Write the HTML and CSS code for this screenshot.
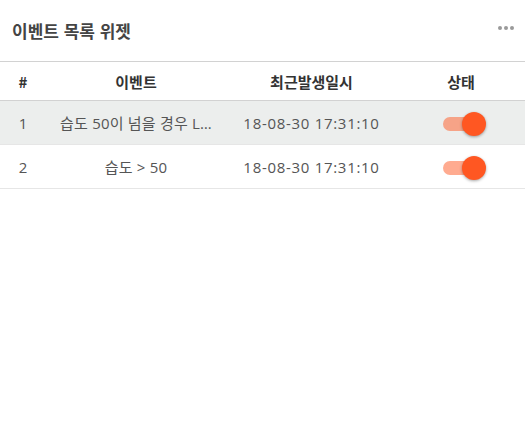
FILE: index.html
```html
<!DOCTYPE html>
<html lang="ko">
<head>
<meta charset="utf-8">
<link rel="stylesheet" href="styles.css">
</head>
<body>
<div class="widget">
  <div class="widget-header">
    <h1 class="widget-title">이벤트 목록 위젯</h1>
    <span class="more" aria-label="더보기"><i></i><i></i><i></i></span>
  </div>
  <table class="event-table">
    <colgroup>
      <col class="c-num"><col class="c-event"><col class="c-date"><col class="c-state">
    </colgroup>
    <thead>
      <tr><th>#</th><th>이벤트</th><th>최근발생일시</th><th>상태</th></tr>
    </thead>
    <tbody>
      <tr class="selected">
        <td>1</td>
        <td class="event">습도 50이 넘을 경우 L…</td>
        <td class="date">18-08-30 17:31:10</td>
        <td><span class="switch"><span class="track"></span><span class="thumb"></span></span></td>
      </tr>
      <tr>
        <td>2</td>
        <td class="event">습도 &gt; 50</td>
        <td class="date">18-08-30 17:31:10</td>
        <td><span class="switch"><span class="track"></span><span class="thumb"></span></span></td>
      </tr>
    </tbody>
  </table>
</div>
</body>
</html>
```

FILE: styles.css
```css
html, body {
  margin: 0;
  padding: 0;
  background: #fff;
}
body {
  font-family: "Open Sans", "Noto Sans CJK KR", sans-serif;
  color: #555;
}
.widget {
  width: 525px;
}
.widget-header {
  height: 61px;
  display: flex;
  align-items: center;
  justify-content: space-between;
  padding: 0 11px 0 12px;
  border-bottom: 1px solid #d2d2d2;
}
.widget-title {
  margin: 0;
  font-family: "Noto Sans CJK KR", sans-serif;
  font-size: 17px;
  font-weight: 700;
  color: #444;
  position: relative;
  top: 0;
}
.more {
  display: flex;
  gap: 2px;
  margin-top: -6px;
}
.more i {
  width: 4px;
  height: 4px;
  border-radius: 50%;
  background: #9a9a9a;
}
.event-table {
  width: 100%;
  border-collapse: collapse;
  table-layout: fixed;
}
.c-num { width: 46px; }
.c-event { width: 180px; }
.c-date { width: 171px; }
.c-state { width: 128px; }
.event-table th {
  height: 38px;
  padding: 0;
  font-family: "Noto Sans CJK KR", sans-serif;
  font-size: 15px;
  font-weight: 700;
  color: #333;
  text-align: center;
  border-bottom: 1px solid #d2d2d2;
}
.event-table td {
  height: 43px;
  padding: 0 4px;
  font-size: 15px;
  text-align: center;
  border-bottom: 1px solid #e6e6e6;
  color: #555;
  white-space: nowrap;
  overflow: hidden;
}
.event-table td.date {
  letter-spacing: 0.7px;
}
.event-table td.event {
  letter-spacing: 0.2px;
}
.event-table tr.selected td {
  background: #eceeed;
}
.switch {
  position: relative;
  display: inline-block;
  width: 36px;
  height: 14px;
  vertical-align: middle;
}
.track {
  display: block;
  width: 36px;
  height: 14px;
  border-radius: 7px;
  background: rgba(255, 87, 34, 0.5);
}
.thumb {
  position: absolute;
  left: 19px;
  top: -5px;
  width: 24px;
  height: 24px;
  border-radius: 50%;
  background: #ff5722;
  box-shadow: 0 1px 3px rgba(0, 0, 0, 0.35);
}
```
